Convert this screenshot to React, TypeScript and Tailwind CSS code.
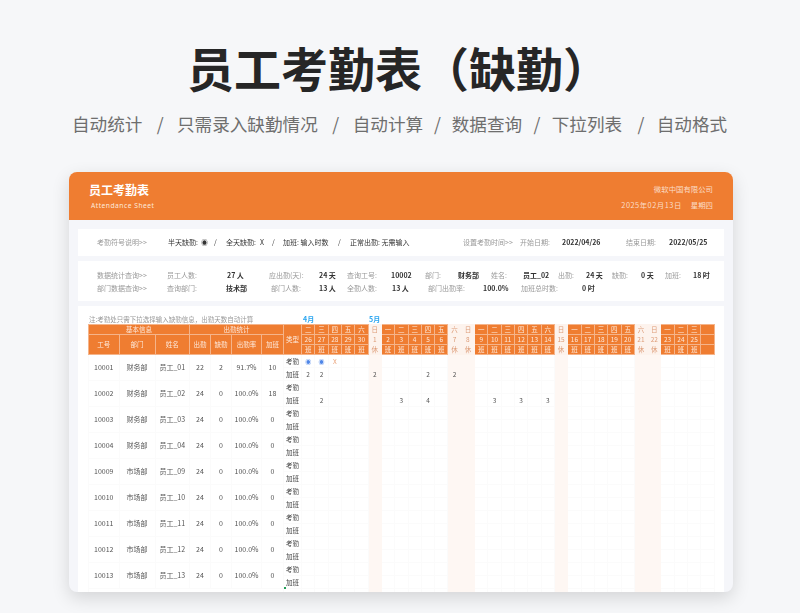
const days = [
  ["二", 26, "班"], ["三", 27, "班"], ["四", 28, "班"], ["五", 29, "班"], ["六", 30, "班"],
  ["日", 1, "休"], ["一", 2, "班"], ["二", 3, "班"], ["三", 4, "班"], ["四", 5, "班"], ["五", 6, "班"],
  ["六", 7, "休"], ["日", 8, "休"], ["一", 9, "班"], ["二", 10, "班"], ["三", 11, "班"], ["四", 12, "班"],
  ["五", 13, "班"], ["六", 14, "班"], ["日", 15, "休"], ["一", 16, "班"], ["二", 17, "班"], ["三", 18, "班"],
  ["四", 19, "班"], ["五", 20, "班"], ["六", 21, "休"], ["日", 22, "休"], ["一", 23, "班"], ["二", 24, "班"],
  ["三", 25, "班"], ["", "", ""],
] as const;

const employees = [
  { id: "10001", dept: "财务部", name: "员工_01", present: 22, absent: 2, rate: "91.7%", extra: 10 },
  { id: "10002", dept: "财务部", name: "员工_02", present: 24, absent: 0, rate: "100.0%", extra: 18 },
  { id: "10003", dept: "财务部", name: "员工_03", present: 24, absent: 0, rate: "100.0%", extra: 0 },
  { id: "10004", dept: "财务部", name: "员工_04", present: 24, absent: 0, rate: "100.0%", extra: 0 },
  { id: "10009", dept: "市场部", name: "员工_09", present: 24, absent: 0, rate: "100.0%", extra: 0 },
  { id: "10010", dept: "市场部", name: "员工_10", present: 24, absent: 0, rate: "100.0%", extra: 0 },
  { id: "10011", dept: "市场部", name: "员工_11", present: 24, absent: 0, rate: "100.0%", extra: 0 },
  { id: "10012", dept: "市场部", name: "员工_12", present: 24, absent: 0, rate: "100.0%", extra: 0 },
  { id: "10013", dept: "市场部", name: "员工_13", present: 24, absent: 0, rate: "100.0%", extra: 0 },
];

// marks by employee row, then by day column index
const attendance: Record<number, Record<number, string>> = {
  0: { 0: "◉", 1: "◉", 2: "X" },
};
const overtime: Record<number, Record<number, string>> = {
  0: { 0: "2", 1: "2", 5: "2", 9: "2", 11: "2" },
  1: { 1: "2", 7: "3", 9: "4", 14: "3", 16: "3", 18: "3" },
};

const headCell = "border border-[#f5b48a] bg-[#ef7d31] p-0 text-center align-middle text-[6.5px] font-normal leading-none text-[#fde9dc]";
const dayCell = "h-[10px] border border-[#f5b48a] bg-[#ef7d31] p-0 text-center align-middle text-[6.5px] font-normal leading-none text-[#fde9dc]";
const restCell = "h-[10px] border border-[#fdf3ed] bg-[#fdf3ed] p-0 text-center align-middle text-[6.5px] font-normal leading-none text-[#dd9c78]";
const infoCell = "border border-[#fbfbfb] p-0 text-center align-middle text-[7px] leading-none text-[#555555]";
const typeCell = "h-[13px] border border-[#fbfbfb] p-0 text-center align-middle text-[6.5px] leading-none text-[#444444]";
const markCell = "h-[13px] border border-[#fbfbfb] p-0 text-center align-middle text-[6.5px] leading-none text-[#555555]";
const markRest = "h-[13px] border border-[#fef7f3] bg-[#fef7f3] p-0 text-center align-middle text-[6.5px] leading-none text-[#555555]";

function Mark({ value }: { value?: string }) {
  if (value === "◉") return <span className="text-[6px] text-[#4f86e8]">◉</span>;
  if (value === "X") return <span className="text-[#e9a37a]">X</span>;
  return <>{value}</>;
}

function AttendanceTable() {
  return (
    <table className="w-[626px] table-fixed border-collapse">
      <colgroup>
        <col className="w-[30.5px]" />
        <col className="w-[36px]" />
        <col className="w-[34.5px]" />
        <col className="w-[21px]" />
        <col className="w-[21px]" />
        <col className="w-[30px]" />
        <col className="w-[22px]" />
        <col className="w-[18px]" />
        {days.map((_, i) => (
          <col key={i} className="w-[13.32px]" />
        ))}
      </colgroup>
      <thead>
        <tr>
          <th colSpan={3} className={headCell}>基本信息</th>
          <th colSpan={4} className={headCell}>出勤统计</th>
          <th rowSpan={3} className={headCell}>类型</th>
          {days.map((d, i) => (
            <th key={i} className={d[2] === "休" ? restCell : dayCell}>{d[0]}</th>
          ))}
        </tr>
        <tr>
          <th rowSpan={2} className={headCell}>工号</th>
          <th rowSpan={2} className={headCell}>部门</th>
          <th rowSpan={2} className={headCell}>姓名</th>
          <th rowSpan={2} className={headCell}>出勤</th>
          <th rowSpan={2} className={headCell}>缺勤</th>
          <th rowSpan={2} className={headCell}>出勤率</th>
          <th rowSpan={2} className={headCell}>加班</th>
          {days.map((d, i) => (
            <th key={i} className={d[2] === "休" ? restCell : dayCell}>{d[1]}</th>
          ))}
        </tr>
        <tr>
          {days.map((d, i) => (
            <th key={i} className={d[2] === "休" ? restCell : dayCell}>{d[2]}</th>
          ))}
        </tr>
      </thead>
      <tbody>
        {employees.flatMap((e, row) => [
          <tr key={`${row}a`}>
            <td rowSpan={2} className={infoCell}>{e.id}</td>
            <td rowSpan={2} className={infoCell}>{e.dept}</td>
            <td rowSpan={2} className={infoCell}>{e.name}</td>
            <td rowSpan={2} className={infoCell}>{e.present}</td>
            <td rowSpan={2} className={infoCell}>{e.absent}</td>
            <td rowSpan={2} className={infoCell}>{e.rate}</td>
            <td rowSpan={2} className={infoCell}>{e.extra}</td>
            <td className={typeCell}>考勤</td>
            {days.map((d, i) => (
              <td key={i} className={d[2] === "休" ? markRest : markCell}>
                <Mark value={attendance[row]?.[i]} />
              </td>
            ))}
          </tr>,
          <tr key={`${row}b`}>
            <td className={typeCell}>加班</td>
            {days.map((d, i) => (
              <td key={i} className={d[2] === "休" ? markRest : markCell}>
                {overtime[row]?.[i]}
              </td>
            ))}
          </tr>,
        ])}
        <tr>
          <td colSpan={7} className={infoCell} />
          <td className={typeCell}>考勤</td>
          {days.map((d, i) => (
            <td key={i} className={d[2] === "休" ? markRest : markCell} />
          ))}
        </tr>
      </tbody>
    </table>
  );
}

export default function App() {
  return (
    <div className="flex h-[613px] w-[800px] flex-col overflow-hidden bg-[#f6f7f9] font-['Noto_Sans_CJK_SC',sans-serif]">
      <h1 className="mt-[38px] h-[58px] pr-[3px] text-center text-[47px] font-bold leading-[58px] text-[#262626]">
        员工考勤表（缺勤）
      </h1>
      <div className="mt-[15px] flex h-[26px] pl-[72px] text-[17.6px] leading-[26px] text-[#6e6e6e]">
        <span>自动统计</span>
        <span className="w-[34.6px] pl-[1px] text-center">/</span>
        <span>只需录入缺勤情况</span>
        <span className="w-[35px] pl-[1px] text-center">/</span>
        <span>自动计算</span>
        <span className="w-[28.6px] text-center">/</span>
        <span>数据查询</span>
        <span className="w-[29.6px] text-center">/</span>
        <span>下拉列表</span>
        <span className="w-[34.6px] pl-[3px] text-center">/</span>
        <span>自动格式</span>
      </div>

      <div className="ml-[69px] mt-[35px] h-[420px] w-[664px] shrink-0 overflow-hidden rounded-[8px] bg-[#f5f6fa] shadow-[0_6px_18px_rgba(0,0,0,0.14)]">
        <header className="flex h-[48px] justify-between bg-[#ef7d31] pl-[20px] pr-[20px] text-white">
          <div>
            <div className="mt-[10px] text-[12px] font-bold leading-[16px]">员工考勤表</div>
            <div className="mt-[3px] pl-[2px] font-['Noto_Sans',sans-serif] text-[6.7px] leading-[10px] tracking-[0.5px] text-[#fde9dc]">
              Attendance Sheet
            </div>
          </div>
          <div className="text-right text-[7.4px] text-[#fbdcc6]">
            <div className="mt-[12px] leading-[10px]">微软中国有限公司</div>
            <div className="mt-[6px] flex justify-end gap-[9px] leading-[10px]">
              <span className="tracking-[0.5px]">2025年02月13日</span>
              <span>星期四</span>
            </div>
          </div>
        </header>

        <div className="flex flex-col gap-[5px] px-[9px] pt-[9px] blur-[0.3px]">
          <div className="flex h-[27px] items-center bg-white pl-[19px] text-[7px] text-[#333333]">
            <span className="w-[71px] text-[#999999]">考勤符号说明&gt;&gt;</span>
            <span className="w-[33px]">半天缺勤:</span>
            <span className="w-[13px]">◉</span>
            <span className="w-[12px]">/</span>
            <span className="w-[34px]">全天缺勤:</span>
            <span className="w-[12px]">X</span>
            <span className="w-[11px]">/</span>
            <span className="w-[55px]">加班: 输入时数</span>
            <span className="w-[12px]">/</span>
            <span className="w-[113px]">正常出勤: 无需输入</span>
            <span className="w-[57px] text-[#999999]">设置考勤时间&gt;&gt;</span>
            <span className="w-[42px] text-[#999999]">开始日期:</span>
            <span className="w-[64px] font-bold">2022/04/26</span>
            <span className="w-[43px] text-[#999999]">结束日期:</span>
            <span className="font-bold">2022/05/25</span>
          </div>

          <div className="flex h-[40px] flex-col justify-center gap-[3px] bg-white pl-[19px] text-[7px] leading-[10px] text-[#999999]">
            <div className="flex">
              <span className="w-[70px]">数据统计查询&gt;&gt;</span>
              <span className="w-[60px]">员工人数:</span>
              <span className="w-[42px] font-bold text-[#333333]">27 人</span>
              <span className="w-[50px]">应出勤(天):</span>
              <span className="w-[28px] font-bold text-[#333333]">24 天</span>
              <span className="w-[44px]">查询工号:</span>
              <span className="w-[34px] font-bold text-[#333333]">10002</span>
              <span className="w-[33px]">部门:</span>
              <span className="w-[33px] font-bold text-[#333333]">财务部</span>
              <span className="w-[32px]">姓名:</span>
              <span className="w-[35px] font-bold text-[#333333]">员工_02</span>
              <span className="w-[28px]">出勤:</span>
              <span className="w-[26px] font-bold text-[#333333]">24 天</span>
              <span className="w-[29px]">缺勤:</span>
              <span className="w-[24px] font-bold text-[#333333]">0 天</span>
              <span className="w-[28px]">加班:</span>
              <span className="font-bold text-[#333333]">18 时</span>
            </div>
            <div className="flex">
              <span className="w-[70px]">部门数据查询&gt;&gt;</span>
              <span className="w-[59px]">查询部门:</span>
              <span className="w-[45px] font-bold text-[#333333]">技术部</span>
              <span className="w-[48px]">部门人数:</span>
              <span className="w-[28px] font-bold text-[#333333]">13 人</span>
              <span className="w-[45px]">全勤人数:</span>
              <span className="w-[36px] font-bold text-[#333333]">13 人</span>
              <span className="w-[55px]">部门出勤率:</span>
              <span className="w-[38px] font-bold text-[#333333]">100.0%</span>
              <span className="w-[61px]">加班总时数:</span>
              <span className="font-bold text-[#333333]">0 时</span>
            </div>
          </div>

          <div className="relative h-[300px] bg-white pl-[10px] pt-[9px]">
            <div className="flex h-[9px] items-center leading-none">
              <span className="w-[215px] pl-[1px] text-[6.5px] text-[#999999]">注:考勤处只需下拉选择输入缺勤信息，出勤天数自动计算</span>
              <span className="w-[66px] text-[7px] font-bold text-[#2aa5f0]">4月</span>
              <span className="text-[7px] font-bold text-[#2aa5f0]">5月</span>
            </div>
            <AttendanceTable />
            <span className="absolute left-[206px] top-[281px] h-[2px] w-[2px] bg-[#1f9d55]" />
          </div>
        </div>
      </div>
    </div>
  );
}
